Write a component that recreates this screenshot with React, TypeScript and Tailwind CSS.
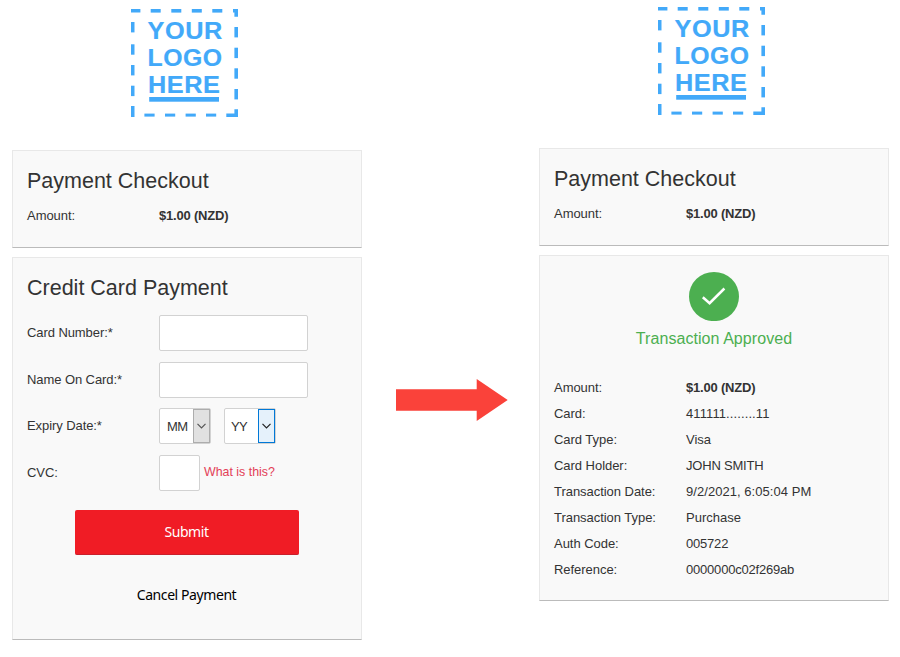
import React from 'react';

const topDashes = [150.7, 171.3, 191.8, 212.3];
const leftDashes = [22, 44.3, 65, 85.7];
const rightDashes = [27, 47.7, 68.3, 89];
const bottomDashes = [144.4, 165, 185.6, 206];

function Logo() {
  return (
    <svg className="block h-[108px] w-[107px]" viewBox="131 9 107 108" fill="#42a9f9">
      <path d="M131 9h9.4v3.6h-9.4zM233 9h5v7.7h-3.6v-4.1H233zM131 106h3.5v11H131zM226.3 113.6h8.1v-4.3h3.6v7.7h-11.7z" />
      {topDashes.map((x) => <rect key={x} x={x} y="9" width="10" height="3.6" />)}
      {leftDashes.map((y) => <rect key={y} x="131" y={y} width="3.5" height="10.4" />)}
      {rightDashes.map((y) => <rect key={y} x="234.4" y={y} width="3.6" height="10.4" />)}
      {bottomDashes.map((x) => <rect key={x} x={x} y="113.6" width="10.2" height="3" />)}
      <g className="font-['Liberation_Sans',Arial,sans-serif] text-[23.4px] font-bold tracking-[0.5px]" stroke="#42a9f9" strokeWidth="0.2">
        <text x="147.6" y="38.7" textLength="75.2" lengthAdjust="spacingAndGlyphs">YOUR</text>
        <text x="147.6" y="65.6" textLength="75" lengthAdjust="spacingAndGlyphs">LOGO</text>
        <text x="148" y="92.7" textLength="72.4" lengthAdjust="spacingAndGlyphs">HERE</text>
      </g>
      <rect x="149.2" y="97" width="69.8" height="4.7" />
    </svg>
  );
}

function Panel({ className, children }: { className: string; children: React.ReactNode }) {
  return (
    <section className={`w-[350px] border border-[#e8e8e8] border-b-[#bbbbbb] bg-[#f9f9f9] px-[14px] ${className}`}>
      {children}
    </section>
  );
}

function Heading({ children }: { children: React.ReactNode }) {
  return <h2 className="text-[21.5px] leading-[26px]">{children}</h2>;
}

function Row({ label, children }: { label: string; children: React.ReactNode }) {
  return (
    <div className="flex h-[26px] items-center">
      <span className="w-[132px] tracking-[-0.04px]">{label}</span>
      {children}
    </div>
  );
}

function Summary() {
  return (
    <Panel className="h-[98px] pt-[17px]">
      <Heading>Payment Checkout</Heading>
      <div className="pt-[9px]">
        <Row label="Amount:"><b className="tracking-[-0.2px]">$1.00 (NZD)</b></Row>
      </div>
    </Panel>
  );
}

function Field({ label, className, children }: { label: string; className: string; children: React.ReactNode }) {
  return (
    <div className={`flex ${className}`}>
      <span className="w-[132px] pt-[3px] leading-[30px] tracking-[-0.08px]">{label}</span>
      {children}
    </div>
  );
}

const input = 'h-[36px] rounded-[2px] border border-[#d2d2d2] bg-white';

function Select({ value, active, className }: { value: string; active?: boolean; className: string }) {
  return (
    <div className={`flex h-[36px] w-[52px] items-stretch rounded-[2px] border border-[#d2d2d2] bg-white ${className}`}>
      <span className="min-w-0 flex-1 text-[13px] leading-[35px] tracking-[-0.6px]">{value}</span>
      <span
        className={`flex w-[17px] shrink-0 items-center justify-center border ${
          active ? 'border-[#0078d7] bg-[#e5f1fb] text-[#222222]' : 'border-[#adadad] bg-[#e1e1e1] text-[#555555]'
        }`}
      >
        <svg className="h-[6px] w-[9px] shrink-0" viewBox="0 0 9 6" fill="none" stroke="currentColor" strokeWidth="1.2">
          <path d="M.5 .8l4 4 4-4" />
        </svg>
      </span>
    </div>
  );
}

const details = [
  ['Card:', '411111........11'],
  ['Card Type:', 'Visa'],
  ['Card Holder:', 'JOHN SMITH'],
  ['Transaction Date:', '9/2/2021, 6:05:04 PM'],
  ['Transaction Type:', 'Purchase'],
  ['Auth Code:', '005722'],
  ['Reference:', '0000000c02f269ab'],
];

const valueTracking: Record<string, string> = {
  'Card:': 'tracking-[0.1px]',
  'Card Holder:': 'tracking-[-0.2px]',
  'Transaction Date:': 'tracking-[0.05px]',
  'Auth Code:': 'tracking-[-0.2px]',
  'Reference:': 'tracking-[-0.2px]',
};

export default function App() {
  return (
    <main className="flex h-[657px] w-[900px] overflow-hidden bg-white font-['Liberation_Sans',Arial,sans-serif] text-[13px] text-[#333333]">
      <div className="ml-[12px] w-[350px] pt-[9px]">
        <div className="mb-[33px] pl-[119px]"><Logo /></div>
        <Summary />
        <Panel className="mt-[9px] h-[383px] pt-[17px]">
          <Heading>Credit Card Payment</Heading>
          <div className="pt-[14px]">
            <Field label="Card Number:*" className="h-[47px]"><input className={`w-[149px] ${input}`} /></Field>
            <Field label="Name On Card:*" className="h-[46px]"><input className={`w-[149px] ${input}`} /></Field>
            <Field label="Expiry Date:*" className="h-[47px]">
              <Select value="MM" className="pl-[7px]" />
              <Select value="YY" active className="ml-[13px] pl-[6px]" />
            </Field>
            <Field label="CVC:" className="h-[55px]">
              <input className={`w-[41px] ${input}`} />
              <a className="pl-[4px] pt-[2px] text-[12.4px] leading-[30px] text-[#e34057]">What is this?</a>
            </Field>
          </div>
          <div className="flex flex-col items-center font-['Noto_Sans',sans-serif] text-[14px] tracking-[-0.42px]">
            <button className="h-[45px] w-[224px] rounded-[2px] border-b border-[#c9202c] bg-[#f01c25] pb-[2px] pr-[1px] text-white">Submit</button>
            <button className="mt-[28px] h-[22px] pr-[1px] text-black">Cancel Payment</button>
          </div>
        </Panel>
      </div>
      <svg className="ml-[34px] mt-[378px] h-[44px] w-[112px] shrink-0" viewBox="0 0 112 44" fill="#fa423a">
        <path d="M0 11.3h80.7V1l31 21-31 21V32.7H0z" />
      </svg>
      <div className="ml-[31px] w-[350px] shrink-0 pt-[7px]">
        <div className="mb-[33px] pl-[119px]"><Logo /></div>
        <Summary />
        <Panel className="mt-[9px] h-[346px] pt-[15px]">
          <div className="flex flex-col items-center text-[#4caf50]">
            <svg className="h-[50px] w-[50px]" viewBox="0 0 50 50">
              <ellipse cx="25" cy="25.5" rx="25" ry="24.6" fill="#4caf50" />
              <path d="M13.8 26.2l6.8 6L35.4 17.5" fill="none" stroke="white" strokeWidth="2.5" />
            </svg>
            <p className="mt-[7px] text-[16px] leading-[22px] tracking-[0.06px]">Transaction Approved</p>
          </div>
          <div className="pt-[25px]">
            <Row label="Amount:"><b className="tracking-[-0.2px]">$1.00 (NZD)</b></Row>
            {details.map(([label, value]) => (
              <Row key={label} label={label}><span className={valueTracking[label]}>{value}</span></Row>
            ))}
          </div>
        </Panel>
      </div>
    </main>
  );
}
